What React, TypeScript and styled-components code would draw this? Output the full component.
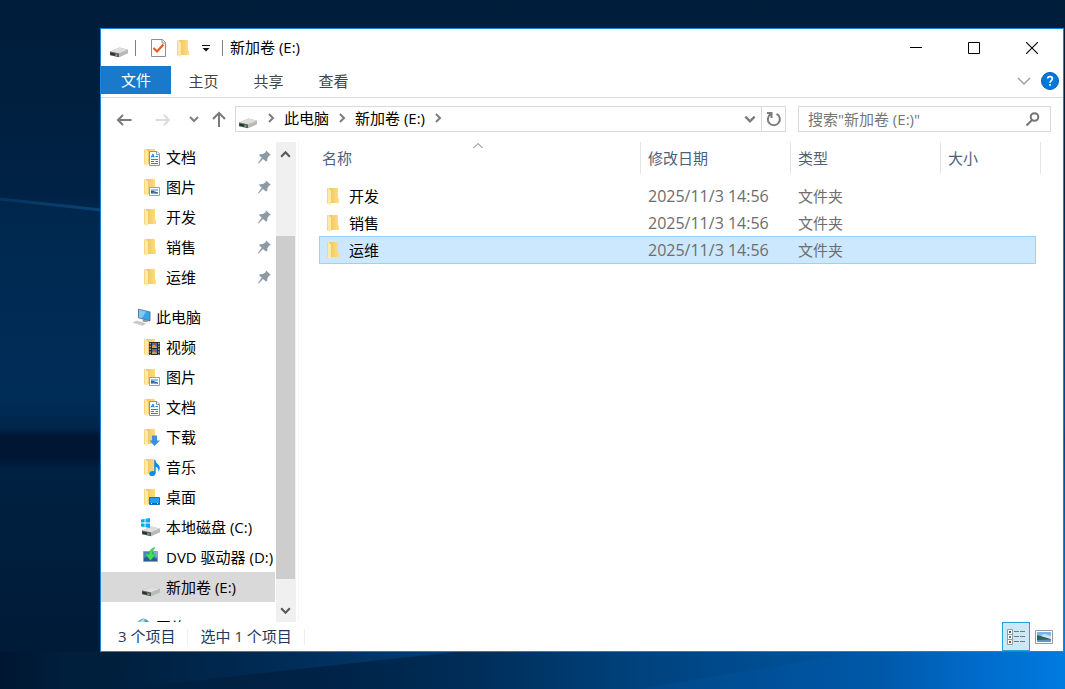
import React from 'react';
import styled, { createGlobalStyle } from 'styled-components';

const GlobalStyle = createGlobalStyle`
  * { box-sizing: border-box; }
  body { margin: 0; }
  body, button, input, table {
    font-family: 'Open Sans', 'Noto Sans CJK SC', sans-serif;
    font-size: 15px;
    line-height: 20px;
  }
  button { border: 0; padding: 0; background: none; color: inherit; }
  svg { display: block; flex: none; }
`;

const Desktop = styled.div`
  position: relative;
  display: flex;
  height: 100vh;
  min-height: 400px;
  padding: 28px 1px 37px 100px;
  background: #00254c;
`;

const Wallpaper = styled.svg`
  position: absolute;
  inset: 0;
  width: 100%;
  height: 100%;
`;

const Window = styled.main`
  position: relative;
  flex: 1;
  min-width: 0;
  display: flex;
  flex-direction: column;
  background: #fff;
  border: 1px solid #1a83d8;
  color: #000;
`;

const TitleBar = styled.header`
  display: flex;
  align-items: center;
  height: 37px;
  flex: none;
  padding: 0 2px 0 8px;
`;

const QuickBar = styled.div`
  display: flex;
  align-items: center;
  padding-left: 13px;
  gap: 5px;
`;

const Rule = styled.span<{ $before: number; $after?: number; $color?: string }>`
  width: 1px;
  height: 16px;
  margin: 0 ${p => p.$after ?? 0}px 0 ${p => p.$before}px;
  background: ${p => p.$color ?? '#808080'};
`;

const Title = styled.h1`
  flex: 1;
  margin: 0;
  padding-bottom: 2px;
  font-size: 15px;
  font-weight: 400;
  white-space: nowrap;
`;

const IconButton = styled.button<{ $w?: number }>`
  display: flex;
  align-items: center;
  justify-content: center;
  width: ${p => p.$w ?? 20}px;
  height: 24px;
  flex: none;
`;

const CaptionButton = styled(IconButton)`
  width: 58px;
  height: 36px;
`;

const Ribbon = styled.nav`
  display: flex;
  flex: none;
  height: 32px;
  padding-right: 3px;
  border-bottom: 1px solid #dadbdc;
`;

const Tab = styled.button<{ $primary?: boolean }>`
  width: ${p => (p.$primary ? 70 : 65)}px;
  height: ${p => (p.$primary ? 28 : 30)}px;
  background: ${p => (p.$primary ? '#1979ca' : 'transparent')};
  color: ${p => (p.$primary ? '#fff' : '#444')};
`;

const RibbonEnd = styled.div`
  display: flex;
  align-items: center;
  gap: 6px;
  margin-left: auto;
  padding-bottom: 2px;
`;

const NavBar = styled.div`
  display: flex;
  align-items: center;
  flex: none;
  padding: 8px 12px 10px 13px;
`;

const History = styled.div`
  display: grid;
  grid-template-columns: 39px 34px 22px 26px;
  align-items: center;
  flex: none;
`;

const Address = styled.div`
  display: flex;
  align-items: center;
  flex: 1;
  min-width: 0;
  height: 26px;
  margin-right: 12px;
  padding-left: 2px;
  border: 1px solid #d9d9d9;
`;

const Crumb = styled.button`
  height: 24px;
  padding-bottom: 2px;
  white-space: nowrap;
`;

const CrumbArrow = styled(IconButton)`
  width: 12px;
  margin: 0 7px;
  padding-bottom: 2px;
`;

const AddressEnd = styled.div`
  display: flex;
  align-items: center;
  margin-left: auto;
`;

const Refresh = styled(IconButton)`
  border-left: 1px solid #d9d9d9;
`;

const Search = styled.label`
  display: flex;
  align-items: center;
  width: 253px;
  height: 26px;
  padding: 0 8px 0 9px;
  border: 1px solid #d9d9d9;
`;

const SearchInput = styled.input`
  flex: 1;
  min-width: 0;
  padding: 0;
  border: 0;
  outline: 0;
  background: none;
  &::placeholder { color: #767676; opacity: 1; }
`;

const Body = styled.div`
  display: flex;
  flex: 1;
  min-height: 0;
`;

const Tree = styled.nav`
  width: 174px;
  flex: none;
  overflow: hidden;
`;

const Group = styled.ul`
  list-style: none;
  margin: 0 0 10px;
  padding: 0;
`;

const TreeItem = styled.button<{ $level: number; $selected?: boolean }>`
  display: flex;
  align-items: center;
  gap: 5px;
  width: 100%;
  height: 30px;
  padding: 0 4px 0 ${p => 20 + p.$level * 10}px;
  background: ${p => (p.$selected ? '#d9d9d9' : 'transparent')};
  white-space: nowrap;
  text-align: left;
`;

const Pin = styled.svg`
  margin-left: auto;
`;

const ScrollTrack = styled.div`
  display: flex;
  flex-direction: column;
  align-items: flex-start;
  flex: none;
  width: 20px;
  margin: 0 2px 0 1px;
  background: #f0f0f0;
`;

const Thumb = styled.div`
  flex: 343;
  width: 19px;
  background: #cdcdcd;
`;

const ThumbSpace = styled.div<{ $grow: number }>`
  flex: ${p => p.$grow};
`;

const Pane = styled.section`
  flex: 1;
  min-width: 0;
  padding: 0 27px 0 20px;
  border-left: 1px solid #f5f5f5;
`;

const Files = styled.table`
  width: 100%;
  table-layout: fixed;
  border-collapse: separate;
  border-spacing: 0;
  tbody::before { content: ''; display: block; height: 8px; }
`;

const Head = styled.th<{ $w?: number }>`
  position: relative;
  width: ${p => (p.$w ? `${p.$w}px` : 'auto')};
  height: 32px;
  padding: 0 0 0 ${p => (p.$w ? 7 : 3)}px;
  border-left: ${p => (p.$w ? '1px solid #e5e5e5' : '0')};
  color: #4c607a;
  font-weight: 400;
  text-align: left;
  &:last-child::after {
    content: '';
    position: absolute;
    top: 0;
    right: -5px;
    width: 1px;
    height: 100%;
    background: #e5e5e5;
  }
`;

const SortMark = styled.svg`
  position: absolute;
  top: 0;
  left: 50%;
  margin-left: -8px;
`;

const Row = styled.tr<{ $selected?: boolean }>`
  height: ${p => (p.$selected ? 28 : 27)}px;
  background: ${p => (p.$selected ? '#cce8ff' : 'transparent')};
  outline: ${p => (p.$selected ? '1px solid #99d1ff' : '0')};
  outline-offset: -1px;
`;

const Cell = styled.td<{ $dim?: boolean; $large?: boolean }>`
  padding: 0 0 0 8px;
  color: ${p => (p.$dim ? '#6d6d6d' : '#000')};
  font-size: ${p => (p.$large ? 16 : 15)}px;
`;

const FileName = styled.div`
  display: flex;
  align-items: center;
  gap: 5px;
  margin-left: -3px;
`;

const StatusBar = styled.footer`
  display: flex;
  align-items: center;
  flex: none;
  height: 29px;
  padding: 0 8px 0 17px;
  color: #1e395b;
  white-space: nowrap;
`;

const StatusText = styled.span`
  padding-bottom: 2px;
`;

const Views = styled.div`
  display: flex;
  align-items: center;
  gap: 3px;
  margin-left: auto;
`;

const ViewButton = styled(IconButton)<{ $on?: boolean }>`
  width: ${p => (p.$on ? 28 : 22)}px;
  height: 29px;
  background: ${p => (p.$on ? '#cbe8f6' : 'transparent')};
  border: ${p => (p.$on ? '1px solid #26a0da' : '0')};
`;

const FolderShape = () => (
  <>
    <path d="M5 2H14V12L15 13V17H6Z" fill="url(#folderBack)" />
    <path d="M3 2H4L7 4.5V17.5L6 19L3 17Z" fill="#ffe9a6" />
    <path d="M3 2V17L4 17.7V2.8Z" fill="#f7d67d" />
  </>
);

const DriveShape = () => (
  <>
    <path d="M1 13.5L10.5 9.5L19 11.8V15L10 19L1 17Z" fill="#a8a8a8" />
    <path d="M1 13.5L10.5 9.5L19 11.8L10 15.4Z" fill="#dedede" />
    <path d="M1 13.5L10 15.4V19.2L1 17.2Z" fill="#5d5d5d" />
    <path d="M10 15.4L19 11.8V15.2L10 19.2Z" fill="#bababa" />
    <path d="M1.5 14.8L6 15.8V17.4L1.5 16.4Z" fill="#2b2b2b" />
    <path d="M6.5 16.3H8.3V17.9H6.5Z" fill="#48ce4b" />
  </>
);

const PictureShape = () => (
  <>
    <path d="M8.5 10.5H18.5V18.5H8.5Z" fill="#fff" stroke="#98a0a8" />
    <path d="M10 12H17V14H10Z" fill="#8fc4f4" />
    <path d="M10 13.5L12.5 14L17 15.5V17H10Z" fill="#285f82" />
    <path d="M10 16L13 15.4L17 16.4V17H10Z" fill="#7bb0dc" />
  </>
);

const DocShape = () => (
  <>
    <path d="M8.5 4.5H16L18.5 7V18.5H8.5Z" fill="#fff" stroke="#8c959d" />
    <path d="M15.5 4.5V7.5H18.5" fill="#fff" stroke="#8c959d" />
    <path d="M10 10.5L12 7L13 10.5M10 9.5H13M14.5 9.5H17M10 12.5H17M10 14.5H13M14.5 14.5H17M10 16.5H17" stroke="#1c86d6" fill="none" />
  </>
);

const VideoShape = () => (
  <>
    <path d="M8 5H19V18H8Z" fill="#2b2b2b" />
    <path d="M11 6H16V11H11ZM11 12H16V17H11Z" fill="#3b6fd0" />
    <path d="M11 9L13 7.5L16 10V11H11Z" fill="#d6a62c" />
    <path d="M12 6H14V8H12ZM13 13H15V15H13Z" fill="#cf4e32" />
    <path d="M11 15.5L13 14.5L16 16V17H11Z" fill="#d6a62c" />
    <path d="M9.2 6V18M17.8 6V18" stroke="#e9e9e9" strokeDasharray="1.3 1.5" />
  </>
);

const DownloadShape = () => (
  <path d="M11 8.5H16V13.5H19L13.5 19L8.5 13.5H11Z" fill="#3b8ee0" />
);

const MusicShape = () => (
  <>
    <path d="M13.2 3H14.5C14.5 6.5 19 7.5 18.8 11C18.8 12.5 18 14 17.2 14.8C17.8 12 17 10.6 14.7 9.8V15.4C14.7 17.8 12.8 19 11 19C9 19 8 17.7 8.3 16.4C8.7 14.6 11 13.6 13.2 14.4Z" fill="#0b8de8" />
  </>
);

const DesktopShape = () => (
  <>
    <path d="M8.5 10.5H18.5V17.5H8.5Z" fill="#1ea0f2" stroke="#1273b8" />
    <path d="M9 16.5H18" stroke="#0d5c9b" />
    <path d="M10 16.5H11M16 16.5H17" stroke="#fff" />
  </>
);

const WindowsShape = () => (
  <path d="M0 2.6L3.6 2V5.6H0ZM4.5 1.8L9 1V5.6H4.5ZM0 6.5H3.6V10.1L0 9.5ZM4.5 6.5H9V11L4.5 10.3Z" fill="#00adef" />
);

const DvdShape = () => (
  <>
    <path d="M2.5 4.5H16.5V14.5H2.5Z" fill="#4c82be" stroke="#93a1ae" />
    <path d="M3 14V11L9 9L16 12V14Z" fill="#2a5a9c" />
    <path d="M12.5 5H16V10L13 9Z" fill="#83afe0" />
    <path d="M13.5 .5C9.5 2 8.2 4 8.2 7H4L9.5 13.5L15 7H11.6C11.4 4.5 12 2.5 13.8 1Z" fill="#3fe055" stroke="#24a83b" strokeWidth=".5" />
  </>
);

const ComputerShape = () => (
  <>
    <path d="M7.5 2.2L19 5V14L7.5 10.8Z" fill="#33a4ee" stroke="#4d6678" strokeWidth=".8" />
    <path d="M8 2.8L15 4.4L11 11.2L8 10.5Z" fill="#7dcaf8" />
    <path d="M12 12.4L16 13.5L17 15.3L11.5 14.5Z" fill="#85929b" />
    <path d="M1 15.4L5.5 13.4L15.5 16.3L11.5 19Z" fill="#d3d8dc" />
    <path d="M3.5 15.3L12.5 17.8M5.5 14.4L13.5 16.8" stroke="#aab3ba" strokeWidth=".6" />
  </>
);

const NetworkShape = () => (
  <>
    <circle cx="12.5" cy="7.5" r="6" fill="#67afd0" />
    <path d="M9 4L13 2L15 5L11 7ZM7 8L10 7L12 11L9 12Z" fill="#b9dde5" />
    <path d="M13 3L17 5V7L14 5Z" fill="#3a8b7c" />
  </>
);

const overlays = {
  folder: null,
  picture: <PictureShape />,
  doc: <DocShape />,
  video: <VideoShape />,
  download: <DownloadShape />,
  music: <MusicShape />,
  desktop: <DesktopShape />,
};

const devices = {
  drive: <DriveShape />,
  system: <><DriveShape /><WindowsShape /></>,
  dvd: <DvdShape />,
  computer: <ComputerShape />,
  network: <NetworkShape />,
};

type IconKind = keyof typeof overlays | keyof typeof devices;

const Icon = ({ kind }: { kind: IconKind }) => (
  <svg width="20" height="20" viewBox="0 0 20 20" aria-hidden="true">
    {kind in devices
      ? devices[kind as keyof typeof devices]
      : <><FolderShape />{overlays[kind as keyof typeof overlays]}</>}
  </svg>
);

type ChevronProps = { dir: 'right' | 'down' | 'up'; size?: number; color?: string; width?: number };

const Chevron = ({ dir, size = 12, color = '#7c7c7c', width = 2 }: ChevronProps) => (
  <svg width={size} height={size} viewBox="0 0 12 12" fill="none" stroke={color} strokeWidth={width} aria-hidden="true">
    <path d={{ right: 'M4 2L8 6L4 10', down: 'M2 4L6 8L10 4', up: 'M2 8L6 4L10 8' }[dir]} />
  </svg>
);

const pinned: [IconKind, string][] = [
  ['doc', '文档'], ['picture', '图片'], ['folder', '开发'], ['folder', '销售'], ['folder', '运维'],
];

const places: [IconKind, string][] = [
  ['video', '视频'], ['picture', '图片'], ['doc', '文档'], ['download', '下载'], ['music', '音乐'],
  ['desktop', '桌面'], ['system', '本地磁盘 (C:)'], ['dvd', 'DVD 驱动器 (D:)'], ['drive', '新加卷 (E:)'],
];

const files = ['开发', '销售', '运维'];

export default function App() {
  return (
    <Desktop>
      <GlobalStyle />
      <Wallpaper viewBox="0 0 1065 689" preserveAspectRatio="none" aria-hidden="true">
        <defs>
          <linearGradient id="folderBack" x1="0" x2="1">
            <stop offset="0" stopColor="#eec55f" />
            <stop offset="1" stopColor="#ffde83" />
          </linearGradient>
          <linearGradient id="sky" x1="0" y1="0" x2="0" y2="1">
            <stop offset="0" stopColor="#001d3a" />
            <stop offset=".28" stopColor="#002245" />
            <stop offset=".31" stopColor="#00284f" />
            <stop offset=".57" stopColor="#002d58" />
            <stop offset=".62" stopColor="#00264c" />
            <stop offset=".635" stopColor="#001633" />
            <stop offset=".665" stopColor="#001633" />
            <stop offset=".68" stopColor="#002142" />
            <stop offset="1" stopColor="#001935" />
          </linearGradient>
          <linearGradient id="glow" gradientUnits="userSpaceOnUse" x1="0" y1="0" x2="1065" y2="0">
            <stop offset="0" stopColor="#001530" />
            <stop offset=".06" stopColor="#001f3c" />
            <stop offset=".3" stopColor="#002245" />
            <stop offset=".45" stopColor="#002e59" />
            <stop offset=".6" stopColor="#00427d" />
            <stop offset=".83" stopColor="#0057a4" />
            <stop offset=".91" stopColor="#006bc9" />
            <stop offset="1" stopColor="#007fe6" />
          </linearGradient>
          <linearGradient id="beam">
            <stop offset="0" stopColor="#003a70" stopOpacity="0" />
            <stop offset="1" stopColor="#00427b" stopOpacity=".8" />
          </linearGradient>
          <linearGradient id="ray" gradientUnits="userSpaceOnUse" x1="0" y1="0" x2="101" y2="0">
            <stop offset="0" stopColor="#0b4a80" stopOpacity=".4" />
            <stop offset="1" stopColor="#0b4a80" stopOpacity=".8" />
          </linearGradient>
          <linearGradient id="edge" x1="0" y1="0" x2="0" y2="1">
            <stop offset="0" stopColor="#0064b8" stopOpacity="0" />
            <stop offset="1" stopColor="#007fe6" />
          </linearGradient>
        </defs>
        <path d="M0 0H1065V689H0Z" fill="url(#sky)" />
        <path d="M0 199L101 210" stroke="url(#ray)" strokeWidth="3" />
        <path d="M0 652H1065V689H0Z" fill="url(#glow)" />
        <path d="M130 652H455L290 670L120 689Z" fill="url(#beam)" />
        <path d="M640 689L860 652H1065V689Z" fill="#0068c0" opacity=".15" />
        <path d="M1064 200H1065V652H1064Z" fill="url(#edge)" />
      </Wallpaper>
      <Window>
        <TitleBar>
          <Icon kind="drive" />
          <Rule $before={6} />
          <QuickBar>
            <IconButton aria-label="属性">
              <svg width="20" height="20" viewBox="0 0 20 20">
                <path d="M2.5 1.5H13.5L16.5 4.5V18.5H2.5Z" fill="#fff" stroke="#8e8e8e" />
                <path d="M13 1.5V5H16.5" fill="none" stroke="#8e8e8e" />
                <path d="M4.5 10L8 13.5L14.5 6.5" fill="none" stroke="#f0581a" strokeWidth="2.2" />
              </svg>
            </IconButton>
            <IconButton aria-label="新建文件夹"><Icon kind="folder" /></IconButton>
            <IconButton $w={14} aria-label="自定义快速访问工具栏">
              <svg width="8" height="8" viewBox="0 0 8 8"><path d="M0 1H8V2H0ZM0.5 4H7.5L4 7.5Z" fill="#111" /></svg>
            </IconButton>
          </QuickBar>
          <Rule $before={9} $after={7} />
          <Title>新加卷 (E:)</Title>
          <CaptionButton aria-label="最小化">
            <svg width="12" height="12" viewBox="0 0 12 12"><path d="M0 5H12V6H0Z" /></svg>
          </CaptionButton>
          <CaptionButton aria-label="最大化">
            <svg width="12" height="12" viewBox="0 0 12 12" fill="none" stroke="#000"><path d="M.5 .5H11.5V11.5H.5Z" /></svg>
          </CaptionButton>
          <CaptionButton aria-label="关闭">
            <svg width="12" height="12" viewBox="0 0 12 12" fill="none" stroke="#000" strokeWidth="1.1"><path d="M0 0L12 12M12 0L0 12" /></svg>
          </CaptionButton>
        </TitleBar>

        <Ribbon aria-label="功能区">
          <Tab $primary>文件</Tab>
          <Tab>主页</Tab>
          <Tab>共享</Tab>
          <Tab>查看</Tab>
          <RibbonEnd>
            <IconButton aria-label="展开功能区"><Chevron dir="down" size={18} color="#a0a0a0" width={1} /></IconButton>
            <IconButton aria-label="帮助">
              <svg width="18" height="18" viewBox="0 0 18 18">
                <circle cx="9" cy="9" r="8.5" fill="#0078d7" stroke="#0a5cad" />
                <path d="M6.6 6.5C6.8 3.9 11.4 3.9 11.4 6.7C11.4 8.5 9 8.7 9 10.8M9 12V13.8" fill="none" stroke="#fff" strokeWidth="1.7" />
              </svg>
            </IconButton>
          </RibbonEnd>
        </Ribbon>

        <NavBar>
          <History>
            <IconButton aria-label="后退">
              <svg width="16" height="16" viewBox="0 0 16 16" fill="none" stroke="#7a7a7a" strokeWidth="2"><path d="M15.5 9H2M7 4L2 9L7 14" /></svg>
            </IconButton>
            <IconButton aria-label="前进">
              <svg width="16" height="16" viewBox="0 0 16 16" fill="none" stroke="#dcdcdc" strokeWidth="2"><path d="M.5 9H14M9 4L14 9L9 14" /></svg>
            </IconButton>
            <IconButton $w={14} aria-label="最近浏览的位置"><Chevron dir="down" /></IconButton>
            <IconButton aria-label="上移">
              <svg width="16" height="16" viewBox="0 0 16 16" fill="none" stroke="#7a7a7a" strokeWidth="2"><path d="M8 16V2M2 8L8 2L14 8" /></svg>
            </IconButton>
          </History>
          <Address>
            <Icon kind="drive" />
            <CrumbArrow aria-label="展开"><Chevron dir="right" /></CrumbArrow>
            <Crumb>此电脑</Crumb>
            <CrumbArrow aria-label="展开"><Chevron dir="right" /></CrumbArrow>
            <Crumb>新加卷 (E:)</Crumb>
            <CrumbArrow aria-label="展开"><Chevron dir="right" /></CrumbArrow>
            <AddressEnd>
              <IconButton $w={22} aria-label="以前的位置"><Chevron dir="down" size={14} /></IconButton>
              <Refresh $w={24} aria-label="刷新">
                <svg width="16" height="16" viewBox="0 0 16 16" fill="none" stroke="#7c7c7c" strokeWidth="2">
                  <path d="M10.5 2.8A6 6 0 1 1 4.5 3.2M1 2H5.5V7" />
                </svg>
              </Refresh>
            </AddressEnd>
          </Address>
          <Search>
            <SearchInput aria-label="搜索" placeholder={'搜索"新加卷 (E:)"'} />
            <svg width="18" height="18" viewBox="0 0 18 18" fill="none" stroke="#747474" strokeWidth="2">
              <circle cx="10.5" cy="7" r="3.8" /><path d="M8 10L2.5 15.5" />
            </svg>
          </Search>
        </NavBar>

        <Body>
          <Tree aria-label="导航窗格">
            <Group>
              {pinned.map(([kind, label]) => (
                <li key={label}>
                  <TreeItem $level={2}>
                    <Icon kind={kind} />
                    {label}
                    <Pin width="13" height="14" viewBox="0 0 13 14" aria-hidden="true">
                      <path d="M8 .5L13 5L11.2 5.6L9.4 8.3L9.2 11L8 11.6L5 8.9L.6 13.5L0 13L3.7 7.7L1 5L1.8 4.2L5 4L7.7 2.2Z" fill="#8d99a3" />
                    </Pin>
                  </TreeItem>
                </li>
              ))}
            </Group>
            <Group>
              <li><TreeItem $level={1}><Icon kind="computer" />此电脑</TreeItem></li>
              {places.map(([kind, label]) => (
                <li key={label}>
                  <TreeItem $level={2} $selected={kind === 'drive'}><Icon kind={kind} />{label}</TreeItem>
                </li>
              ))}
            </Group>
            <Group>
              <li><TreeItem $level={1}><Icon kind="network" />网络</TreeItem></li>
            </Group>
          </Tree>
          <ScrollTrack>
            <IconButton $w={19} aria-label="向上滚动"><Chevron dir="up" size={13} color="#5a5a5a" /></IconButton>
            <ThumbSpace $grow={70} />
            <Thumb />
            <ThumbSpace $grow={19} />
            <IconButton $w={19} aria-label="向下滚动"><Chevron dir="down" size={13} color="#5a5a5a" /></IconButton>
          </ScrollTrack>
          <Pane>
            <Files>
              <thead>
                <tr>
                  <Head>
                    名称
                    <SortMark width="12" height="8" viewBox="0 0 12 8" fill="none" stroke="#777"><path d="M1.5 6L6 1.5L10.5 6" /></SortMark>
                  </Head>
                  <Head $w={150}>修改日期</Head>
                  <Head $w={150}>类型</Head>
                  <Head $w={96}>大小</Head>
                </tr>
              </thead>
              <tbody>
                {files.map(name => (
                  <Row key={name} $selected={name === '运维'}>
                    <Cell><FileName><Icon kind="folder" />{name}</FileName></Cell>
                    <Cell $dim $large>2025/11/3 14:56</Cell>
                    <Cell $dim>文件夹</Cell>
                    <Cell />
                  </Row>
                ))}
              </tbody>
            </Files>
          </Pane>
        </Body>

        <StatusBar>
          <StatusText>3 个项目</StatusText>
          <Rule $before={12} $after={12} $color="#eee" />
          <StatusText>选中 1 个项目</StatusText>
          <Rule $before={12} $color="#eee" />
          <Views>
            <ViewButton $on aria-label="详细信息">
              <svg width="20" height="18" viewBox="0 0 20 18">
                <path d="M1.5 1.5H6.5V16.5H1.5ZM1.5 6.5H6.5M1.5 11.5H6.5" fill="#fff" stroke="#9a9a9a" />
                <path d="M3 3H5V5H3Z" fill="#276d8e" />
                <path d="M3 8H5V10H3Z" fill="#4476c4" />
                <path d="M3 13H5V15H3Z" fill="#c23a2a" />
                <path d="M8 3.5H13M14 3.5H19M8 8.5H13M14 8.5H19M8 13.5H13M14 13.5H19" stroke="#777" />
              </svg>
            </ViewButton>
            <ViewButton aria-label="大缩略图">
              <svg width="18" height="14" viewBox="0 0 18 14">
                <path d="M.5 .5H17.5V13.5H.5Z" fill="#fff" stroke="#999" />
                <path d="M2 2H16V8H2Z" fill="#78b4f0" />
                <path d="M6 5L10 4L16 6V8H8Z" fill="#cbe3f8" />
                <path d="M2 5L7 6.5L16 9V10.5H2Z" fill="#2f6354" />
                <path d="M2 10L16 9.5V12H2Z" fill="#5e94c8" />
              </svg>
            </ViewButton>
          </Views>
        </StatusBar>
      </Window>
    </Desktop>
  );
}
